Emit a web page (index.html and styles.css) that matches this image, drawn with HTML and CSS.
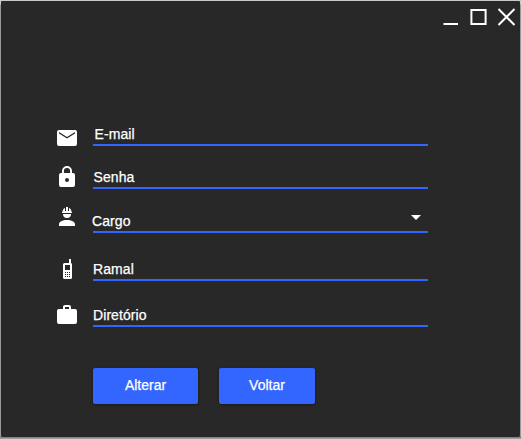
FILE: index.html
```html
<!DOCTYPE html>
<html lang="pt-BR">
<head>
<meta charset="utf-8">
<title>Alterar</title>
<link rel="stylesheet" href="styles.css">
</head>
<body>
<main class="window">
  <header class="titlebar">
    <svg width="73" height="18" viewBox="0 0 73 18" fill="none" stroke="#fff" stroke-width="2">
      <path d="M.5 16H15M28.4 2H42.6V16H28.4ZM55.5 1L71.5 17M71.5 1L55.5 17"/>
    </svg>
  </header>
  <form class="form">
    <div class="row email">
      <svg class="icon" viewBox="0 0 24 24"><path d="M20 4H4a2 2 0 0 0-2 2v12a2 2 0 0 0 2 2h16a2 2 0 0 0 2-2V6a2 2 0 0 0-2-2zm0 3.600-8 5-8-5V6l8 5 8-5z"/></svg>
      <div class="field">E-mail</div>
    </div>
    <div class="row password">
      <svg class="icon" viewBox="0 0 24 24"><path d="M18 8h-1V6A5 5 0 0 0 7 6v2H6a2 2 0 0 0-2 2v10a2 2 0 0 0 2 2h12a2 2 0 0 0 2-2V10a2 2 0 0 0-2-2zm-6 9a2 2 0 1 1 0-4 2 2 0 0 1 0 4zm3.100-9H8.900V6a3.100 3.100 0 0 1 6.200 0z"/></svg>
      <div class="field">Senha</div>
    </div>
    <div class="row role">
      <svg class="icon" viewBox="0 0 24 24"><path d="M12 15c-4.400 0-8 1.800-8 4v2h16v-2c0-2.200-3.600-4-8-4zM8 9a4 4 0 0 0 8 0zM11 2h2v4h1V3c1.500.6 2.500 2 2.500 4H17v1H7V7h.5c0-2 1-3.400 2.500-4v3h1z"/></svg>
      <div class="field">Cargo<svg class="arrow" viewBox="0 0 10 5"><path d="M0 0H10L5 5Z"/></svg></div>
    </div>
    <div class="row phone">
      <svg class="icon" viewBox="0 0 24 24"><path fill-rule="evenodd" d="M14 2h2v4c.6.200 1 .7 1 1.400V20.500A1.500 1.500 0 0 1 15.500 22h-6A1.500 1.500 0 0 1 8 20.500V7.500A1.500 1.500 0 0 1 9.500 6H14zM10 8v5h5V8zM10 15v1h1v-1zM12 15v1h1v-1zM14 15v1h1v-1zM10 17v1h1v-1zM12 17v1h1v-1zM14 17v1h1v-1zM10 19v1h1v-1zM12 19v1h1v-1zM14 19v1h1v-1z"/></svg>
      <div class="field">Ramal</div>
    </div>
    <div class="row directory">
      <svg class="icon" viewBox="0 0 24 24"><path d="M10 2h4a2 2 0 0 1 2 2v2h4a2 2 0 0 1 2 2v11a2 2 0 0 1-2 2H4a2 2 0 0 1-2-2V8c0-1.100.9-2 2-2h4V4c0-1.100.9-2 2-2m4 4V4h-4v2z"/></svg>
      <div class="field">Diretório</div>
    </div>
    <div class="actions">
      <button class="button save" type="button">Alterar</button>
      <button class="button back" type="button">Voltar</button>
    </div>
  </form>
</main>
</body>
</html>
```
FILE: styles.css
```css
* { box-sizing: border-box; }
body {
  height: 439px;
  margin: 0;
  font: 14px/16px "Liberation Sans", Arial, sans-serif;
  letter-spacing: .08px;
  color: #fff;
  -webkit-text-stroke: .25px #fff;
  background: linear-gradient(#c8cac8 0 4px, #999 5px 436px, #777 437px, #aaa 439px);
}
.window {
  height: 437px;
  background: #282828;
  background-clip: padding-box;
  border: 1px solid transparent;
  border-bottom: 0;
  border-radius: 2px;
}
.titlebar {
  display: flex;
  justify-content: flex-end;
  height: 121px;
  padding: 7px 4px 0 0;
}
.form { padding-left: 54px; }
.row {
  display: flex;
  align-items: flex-start;
  gap: 14px;
  height: 24px;
}
.icon {
  flex: none;
  width: 24px;
  height: 24px;
  fill: #fff;
}
.field {
  display: flex;
  justify-content: space-between;
  width: 335px;
  height: 24px;
  padding-top: 4px;
  border-bottom: 2px solid #3366ff;
}
.email .icon { margin-top: 4px; }
.email .field { padding-left: 1.5px; }
.password { margin-top: 19px; }
.password .field { padding-left: .5px; }
.role { margin-top: 20px; }
.role .icon { margin-top: -4px; }
.role .field { text-indent: -1px; }
.phone { margin-top: 24px; }
.directory { margin-top: 22px; }
.arrow {
  width: 10px;
  height: 5px;
  margin: 2px 7px 0 0;
  fill: #fff;
}
.actions {
  display: flex;
  gap: 21px;
  margin: 41px 0 0 38px;
}
.button {
  height: 36px;
  padding: 0 0 2px;
  border: 0;
  border-radius: 2px;
  font: inherit;
  color: #fff;
  background: #3366ff;
  box-shadow: 0 1px 3px rgba(0, 0, 0, .4);
}
.save { width: 105px; }
.back { width: 96px; }
```
